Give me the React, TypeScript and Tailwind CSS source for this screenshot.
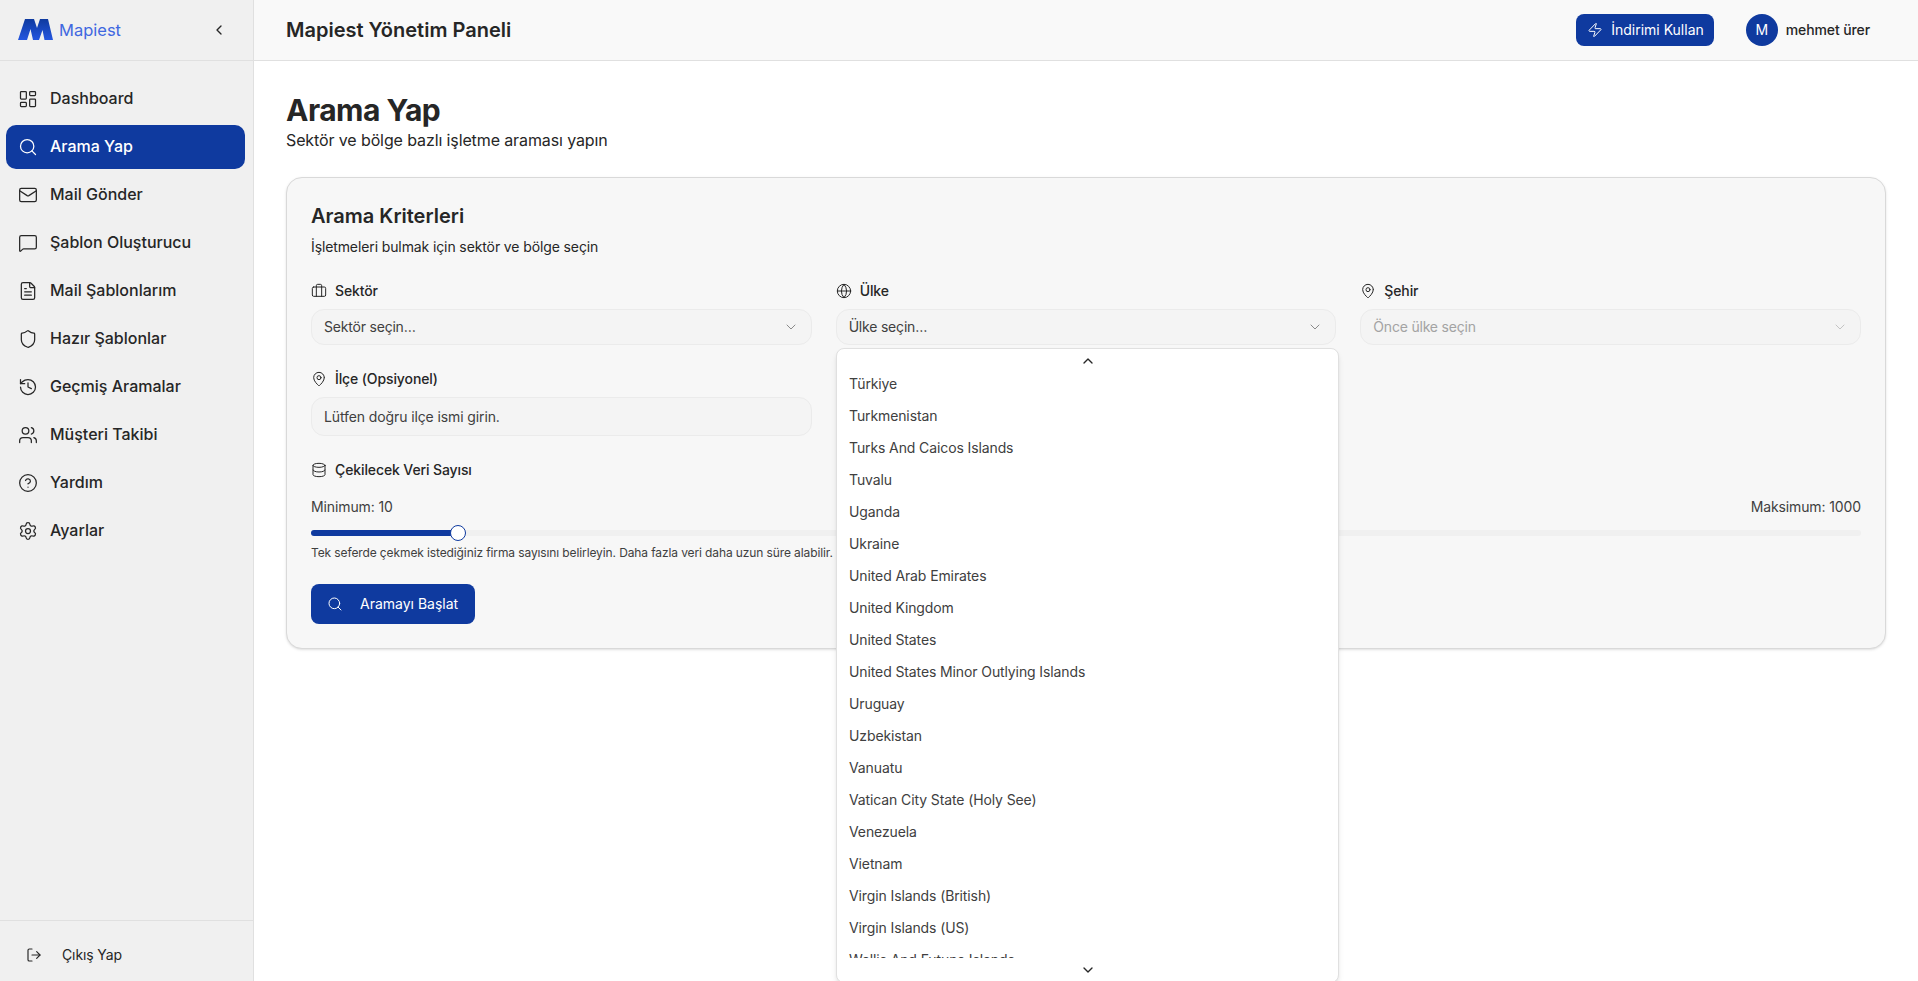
import {
  LayoutDashboard, Search, Mail, MessageSquare, FileText, Shield, History, Users, CircleHelp, Settings,
  LogOut, Zap, Briefcase, Globe, MapPin, Database, ChevronDown, ChevronUp, ChevronLeft,
} from "lucide-react";

const nav = [
  { label: "Dashboard", icon: LayoutDashboard },
  { label: "Arama Yap", icon: Search, active: true },
  { label: "Mail Gönder", icon: Mail },
  { label: "Şablon Oluşturucu", icon: MessageSquare },
  { label: "Mail Şablonlarım", icon: FileText },
  { label: "Hazır Şablonlar", icon: Shield },
  { label: "Geçmiş Aramalar", icon: History },
  { label: "Müşteri Takibi", icon: Users },
  { label: "Yardım", icon: CircleHelp },
  { label: "Ayarlar", icon: Settings },
];

const countries = [
  "Türkiye", "Turkmenistan", "Turks And Caicos Islands", "Tuvalu", "Uganda", "Ukraine", "United Arab Emirates",
  "United Kingdom", "United States", "United States Minor Outlying Islands", "Uruguay", "Uzbekistan", "Vanuatu",
  "Vatican City State (Holy See)", "Venezuela", "Vietnam", "Virgin Islands (British)", "Virgin Islands (US)",
  "Wallis And Futuna Islands",
];

function Logo() {
  return (
    <svg width="36" height="22" viewBox="0 0 36 22" className="shrink-0">
      <defs>
        <linearGradient id="lg" x1="0" y1="0" x2="0" y2="1">
          <stop offset="0" stopColor="#0f3a9f" />
          <stop offset="1" stopColor="#2456e0" />
        </linearGradient>
      </defs>
      <path d="M0 21 L7 0 H16 L19 9 L22 0 H30 L35 21 H26.5 L24.5 11 L21 21 H15 L12.5 10 L9 21 Z" fill="url(#lg)" />
    </svg>
  );
}

function Field({ icon: Icon, label, children }: { icon: any; label: string; children: React.ReactNode }) {
  return (
    <div>
      <div className="flex items-center gap-2 h-5 mb-2 text-sm font-[450] text-[#262626]">
        <Icon size={16} strokeWidth={1.5} />
        <span>{label}</span>
      </div>
      {children}
    </div>
  );
}

function SelectBox({ text, disabled }: { text: string; disabled?: boolean }) {
  return (
    <div className={`flex items-center justify-between h-9 px-3 rounded-[13px] border border-[#ebebeb] bg-[#f4f4f4] text-sm tracking-[-0.2px] ${disabled ? "text-[#a3a3a3]" : "text-[#404040]"}`}>
      <span>{text}</span>
      <ChevronDown size={16} strokeWidth={1.5} className={disabled ? "text-[#c4c4c4]" : "text-[#8a8a8a]"} />
    </div>
  );
}

export default function App() {
  return (
    <div className="flex h-[981px] overflow-hidden bg-white text-[#262626] tracking-[-0.007em] font-['Inter',sans-serif]">
      <aside className="w-[254px] shrink-0 flex flex-col bg-[#f0f0f0] border-r border-[#e0e0e0]">
        <div className="h-[61px] shrink-0 flex items-center justify-between pl-[18px] pr-[26px] border-b border-[#e0e0e0]">
          <div className="flex items-center gap-[5px]">
            <Logo />
            <span className="text-[16.5px] tracking-normal text-[#3f68e0]">Mapiest</span>
          </div>
          <ChevronLeft size={16} strokeWidth={2} />
        </div>
        <nav className="flex-1 flex flex-col gap-1 pt-4 pl-[6px] pr-2">
          {nav.map(({ label, icon: Icon, active }) => (
            <div
              key={label}
              className={`flex items-center gap-3 h-11 px-3 rounded-[10px] text-base tracking-normal font-[450] ${active ? "bg-[#0f3a9f] text-white" : "text-[#262626]"}`}
            >
              <Icon size={20} strokeWidth={1.5} />
              <span className="pb-0.5">{label}</span>
            </div>
          ))}
        </nav>
        <div className="h-[61px] shrink-0 flex items-center gap-5 pl-[26px] pt-[7px] border-t border-[#e0e0e0] text-sm">
          <LogOut size={16} strokeWidth={1.75} />
          <span>Çıkış Yap</span>
        </div>
      </aside>
      <div className="flex-1 min-w-0 flex flex-col">
        <header className="h-[61px] shrink-0 flex items-center justify-between pl-8 pr-12 bg-[#f9f9f9] border-b border-[#e0e0e0]">
          <h1 className="text-xl font-semibold tracking-normal">Mapiest Yönetim Paneli</h1>
          <div className="flex items-center gap-8">
            <button className="flex items-center gap-2 h-8 pl-[11px] pr-2.5 rounded-lg bg-[#0f3a9f] text-white text-sm tracking-normal">
              <Zap size={16} strokeWidth={1.5} />
              İndirimi Kullan
            </button>
            <div className="flex items-center gap-2 text-sm font-[450]">
              <div className="flex items-center justify-center size-8 rounded-full bg-[#0f3a9f] text-white font-normal">M</div>
              <span>mehmet ürer</span>
            </div>
          </div>
        </header>
        <main className="flex-1 px-8 pt-[31px]">
          <h2 className="text-3xl font-bold leading-9 tracking-[-0.5px]">Arama Yap</h2>
          <p className="text-base">Sektör ve bölge bazlı işletme araması yapın</p>
          <section className="relative mt-[25px] rounded-2xl border border-[#d9d9d9] bg-[#f7f7f7] shadow-sm p-6 h-[472px]">
            <h3 className="text-xl font-semibold leading-7 tracking-normal">Arama Kriterleri</h3>
            <p className="mt-[7px] text-sm">İşletmeleri bulmak için sektör ve bölge seçin</p>
            <div className="mt-6 grid grid-cols-3 gap-x-6 gap-y-6">
              <Field icon={Briefcase} label="Sektör"><SelectBox text="Sektör seçin…" /></Field>
              <Field icon={Globe} label="Ülke"><SelectBox text="Ülke seçin…" /></Field>
              <Field icon={MapPin} label="Şehir"><SelectBox text="Önce ülke seçin" disabled /></Field>
              <Field icon={MapPin} label="İlçe (Opsiyonel)">
                <div className="flex items-center h-[39px] px-3 rounded-[13px] border border-[#ebebeb] bg-[#f4f4f4] text-sm text-[#404040]">Lütfen doğru ilçe ismi girin.</div>
              </Field>
            </div>
            <div className="mt-6">
              <div className="flex items-center gap-2 h-5 text-sm font-[450]">
                <Database size={16} strokeWidth={1.5} />
                <span>Çekilecek Veri Sayısı</span>
              </div>
              <div className="mt-[17px] flex justify-between text-sm text-[#404040]">
                <span>Minimum: 10</span>
                <span>Maksimum: 1000</span>
              </div>
              <div className="relative mt-[13px] h-1.5 rounded-full bg-[#f0f0f0]">
                <div className="h-full w-[147px] rounded-full bg-[#0f3a9f]" />
                <div className="absolute left-[139px] top-[-5px] size-4 rounded-full bg-white border-[1.5px] border-[#0f3a9f]" />
              </div>
              <p className="mt-[9px] text-xs text-[#404040]">Tek seferde çekmek istediğiniz firma sayısını belirleyin. Daha fazla veri daha uzun süre alabilir.</p>
            </div>
            <button className="mt-[23px] flex items-center gap-[17px] h-10 pl-4 pr-[17px] rounded-lg bg-[#0f3a9f] text-white text-sm tracking-normal">
              <Search size={16} strokeWidth={1.5} />
              Aramayı Başlat
            </button>
            <div className="absolute left-[549px] top-[170px] w-[503px] h-[635px] flex flex-col rounded-lg border border-[#e0e0e0] bg-white shadow-md">
              <div className="h-6 shrink-0 flex items-center justify-center">
                <ChevronUp size={16} strokeWidth={2} />
              </div>
              <div className="flex-1 min-h-0 overflow-hidden px-1">
                <div className="-mt-[5px]">
                  {countries.map((c) => (
                    <div key={c} className="flex items-center h-8 px-2 text-sm text-[#404040]">{c}</div>
                  ))}
                </div>
              </div>
              <div className="h-6 shrink-0 flex items-center justify-center">
                <ChevronDown size={16} strokeWidth={2} />
              </div>
            </div>
          </section>
        </main>
      </div>
    </div>
  );
}
